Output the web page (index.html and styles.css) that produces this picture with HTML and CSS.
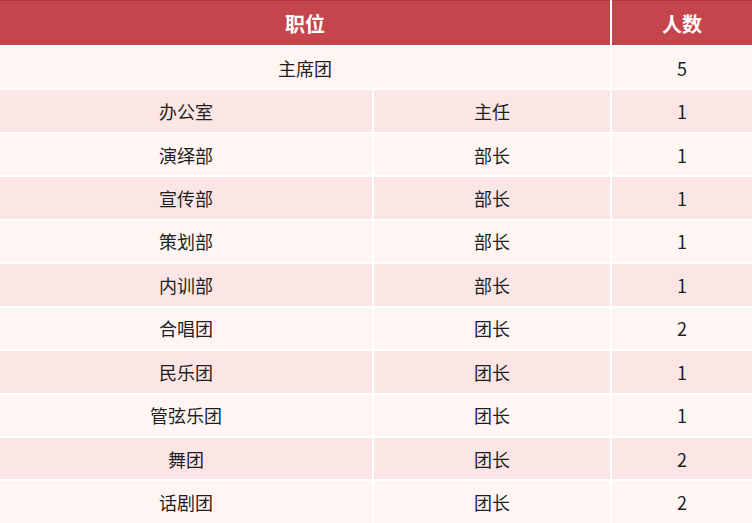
FILE: index.html
```html
<!DOCTYPE html>
<html lang="zh">
<head>
<meta charset="utf-8">
<link rel="stylesheet" href="styles.css">
</head>
<body>
<div class="table">
  <div class="cell head span2">职位</div>
  <div class="cell head">人数</div>

  <div class="cell odd span2">主席团</div>
  <div class="cell odd">5</div>

  <div class="cell even">办公室</div><div class="cell even">主任</div><div class="cell even">1</div>
  <div class="cell odd">演绎部</div><div class="cell odd">部长</div><div class="cell odd">1</div>
  <div class="cell even">宣传部</div><div class="cell even">部长</div><div class="cell even">1</div>
  <div class="cell odd">策划部</div><div class="cell odd">部长</div><div class="cell odd">1</div>
  <div class="cell even">内训部</div><div class="cell even">部长</div><div class="cell even">1</div>
  <div class="cell odd">合唱团</div><div class="cell odd">团长</div><div class="cell odd">2</div>
  <div class="cell even">民乐团</div><div class="cell even">团长</div><div class="cell even">1</div>
  <div class="cell odd">管弦乐团</div><div class="cell odd">团长</div><div class="cell odd">1</div>
  <div class="cell even">舞团</div><div class="cell even">团长</div><div class="cell even">2</div>
  <div class="cell odd">话剧团</div><div class="cell odd">团长</div><div class="cell odd">2</div>
</div>
</body>
</html>
```
FILE: styles.css
```css
html, body {
  margin: 0;
  padding: 0;
  background: #ffffff;
}
body {
  font-family: "Noto Sans CJK SC", "Noto Sans", sans-serif;
  overflow: hidden;
}
.table {
  display: grid;
  grid-template-columns: 372px 236px 140px;
  grid-template-rows: 45px repeat(11, 41.45px);
  column-gap: 2px;
  row-gap: 2px;
  width: 752px;
}
.cell {
  display: flex;
  align-items: center;
  justify-content: center;
  font-size: 18px;
  color: #1f1f1f;
}
.span2 {
  grid-column: span 2;
}
.head {
  background: #c4454b;
  color: #ffffff;
  font-weight: 700;
  font-size: 20px;
  border-top: 1px solid #a9373c;
  box-sizing: border-box;
}
.odd {
  background: #fff6f4;
}
.even {
  background: #fce6e5;
}
```
